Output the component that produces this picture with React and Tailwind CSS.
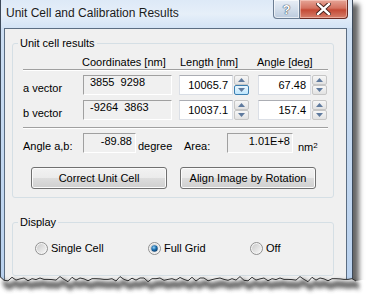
import React from "react";

// Unit Cell and Calibration Results dialog (Win7 look, torn bottom edge)

function SpinHalf({ up, hot }) {
  return (
    <div
      className={
        "flex-1 flex items-center justify-center rounded-[2px] border " +
        (hot
          ? "border-[#3c7fb1] bg-gradient-to-b from-[#eaf6fd] to-[#bee6fd]"
          : "border-[#c6c6c6] bg-gradient-to-b from-[#f7f7f7] to-[#e2e2e2]")
      }
    >
      <svg width="7" height="4" viewBox="0 0 7 4">
        {up ? (
          <path d="M0 4 L3.5 0 L7 4 Z" fill="#5f7a9e" />
        ) : (
          <path d="M0 0 L3.5 4 L7 0 Z" fill="#5f7a9e" />
        )}
      </svg>
    </div>
  );
}

function SpinEdit({ value, width, hot }) {
  return (
    <div className="flex h-[20px] gap-[1px]">
      <div
        className={`${width} h-full flex items-center justify-end pr-[4px] bg-white border border-[#dbdfe6] border-t-[#abadb3] text-[11px] leading-[13px]`}
      >
        {value}
      </div>
      <div className="w-[15px] h-full flex flex-col">
        <SpinHalf up />
        <SpinHalf hot={hot} />
      </div>
    </div>
  );
}

function Radio({ checked }) {
  return (
    <svg width="13" height="13" viewBox="0 0 13 13">
      <defs>
        <linearGradient id="rg" x1="0" y1="0" x2="1" y2="1">
          <stop offset="0" stopColor="#cbcbcb" />
          <stop offset="1" stopColor="#f6f6f6" />
        </linearGradient>
        <radialGradient id="rd" cx="0.4" cy="0.35" r="0.7">
          <stop offset="0" stopColor="#9fd4f5" />
          <stop offset="0.5" stopColor="#1a6fb0" />
          <stop offset="1" stopColor="#0c3a66" />
        </radialGradient>
      </defs>
      <circle cx="6.5" cy="6.5" r="6" fill="#f4f4f4" stroke="#8f8f8f" strokeWidth="1" />
      <circle cx="6.5" cy="6.5" r="4.5" fill="url(#rg)" />
      {checked && <circle cx="6.5" cy="6.5" r="3.2" fill="url(#rd)" />}
    </svg>
  );
}

function WinButton({ children }) {
  return (
    <button className="w-[136px] h-[22px] rounded-[3px] border border-[#707070] bg-[linear-gradient(#f2f2f2_0%,#ebebeb_50%,#dddddd_51%,#cfcfcf_100%)] shadow-[inset_0_0_0_1px_#fbfbfb] text-[11px] leading-[13px] text-black">
      {children}
    </button>
  );
}

const jag = [];
for (let x = 0, i = 0; x <= 356; x += 4, i++) {
  const y = 12 + ((i * 7) % 5) * 0.7 - (i % 3 === 0 ? 1.4 : 0) + (i % 4 === 1 ? 0.9 : 0);
  jag.push([x, y]);
}
const jagStr = jag.map((p) => p.join(",")).join(" ");
const whiteStr = jagStr + " 369,13 369,30 0,30";
const shadowTop = jag.map(([x, y]) => `${x + 3},${y + 2}`).join(" ");
const shadowBot = [...jag].reverse().map(([x, y]) => `${x + 3},${y + 9}`).join(" ");

export default function App() {
  return (
    <div className="relative w-[369px] h-[296px] bg-white overflow-hidden font-['Liberation_Sans',Arial,sans-serif] text-black">
      <div className="w-[353px] h-[286px] flex flex-col border-x border-[#3d4a5a] bg-gradient-to-b from-[#cfe0f3] to-[#b9d1ee] shadow-[6px_4px_5px_rgba(0,0,0,0.6)]">
        {/* title bar */}
        <div className="h-[28px] flex items-start bg-gradient-to-b from-[#dde9f7] via-[#e6eff9] to-[#d3e3f5]">
          <div className="flex-1 pl-[5px] pt-[6px] text-[12px] leading-[15px] text-[#1b1b1b]">
            Unit Cell and Calibration Results
          </div>
          <div className="flex mr-[4px]">
            <div className="w-[27px] h-[19px] flex items-center justify-center rounded-bl-[4px] border border-t-0 border-[#6b7d93] bg-gradient-to-b from-[#e8eef6] via-[#d3deeb] to-[#bccbde] shadow-[inset_0_0_0_1px_rgba(255,255,255,0.6)]">
              <span className="text-[13px] leading-[13px] font-bold text-white [text-shadow:0_0_1px_#1d2a3a,0_0_1px_#1d2a3a]">?</span>
            </div>
            <div className="w-[48px] h-[19px] flex items-center justify-center rounded-br-[4px] border border-t-0 border-l-0 border-[#6a2a22] bg-[linear-gradient(#e6a597_0%,#d47260_45%,#c44a35_55%,#d5806c_100%)] shadow-[inset_0_0_0_1px_rgba(255,220,210,0.5)]">
              <svg width="15" height="12" viewBox="0 0 15 12">
                <path d="M2 1 L13 11 M13 1 L2 11" stroke="#3a1a16" strokeWidth="4.2" strokeLinecap="square" />
                <path d="M2 1 L13 11 M13 1 L2 11" stroke="#ffffff" strokeWidth="2.4" strokeLinecap="square" />
              </svg>
            </div>
          </div>
        </div>

        {/* body frame */}
        <div className="flex-1 flex pl-[3px] pr-[5px]">
          <div className="flex-1 border border-[#5b6d82] bg-[#f0f0f0] pl-[7px] pt-[8px] text-[11px] leading-[13px]">
            <fieldset className="w-[322px] border border-[#d5dfe5] rounded-[3px] pb-[8px]">
              <legend className="ml-[5px] px-[2px]">Unit cell results</legend>

              <div className="flex mt-[6px] pl-[10px]">
                <div className="w-[59px]" />
                <div className="w-[97px]">Coordinates [nm]</div>
                <div className="w-[78px] pl-[1px]">Length [nm]</div>
                <div>Angle [deg]</div>
              </div>
              <div className="ml-[10px] mr-[5px] h-[2px] border-t border-b border-t-[#a0a0a0] border-b-white" />

              {[
                ["a vector", "3855  9298", "10065.7", "67.48", true],
                ["b vector", "-9264  3863", "10037.1", "157.4", false],
              ].map(([label, coords, len, ang, hot], i) => (
                <div key={label} className={"flex h-[20px] pl-[10px] " + (i === 0 ? "mt-[4px]" : "mt-[5px]")}>
                  <div className="w-[60px] pt-[7px]">{label}</div>
                  <div className="w-[89px] h-full border border-[#a0a0a0] border-r-white border-b-white pl-[6px] whitespace-pre">
                    {coords}
                  </div>
                  <div className="ml-[7px]">
                    <SpinEdit value={len} width="w-[54px]" hot={hot} />
                  </div>
                  <div className="ml-[9px]">
                    <SpinEdit value={ang} width="w-[53px]" />
                  </div>
                </div>
              ))}

              <div className="mt-[7px] ml-[10px] mr-[5px] h-[2px] border-t border-b border-t-[#a0a0a0] border-b-white" />

              <div className="flex h-[20px] mt-[4px] pl-[10px]">
                <div className="w-[60px] pt-[7px]">Angle a,b:</div>
                <div className="w-[53px] h-full border border-[#a0a0a0] border-r-white border-b-white pt-[1px] pr-[3px] text-right">
                  -89.88
                </div>
                <div className="w-[48px] pl-[2px] pt-[7px]">degree</div>
                <div className="w-[43px] pt-[7px]">Area:</div>
                <div className="w-[66px] h-full border border-[#a0a0a0] border-r-white border-b-white pt-[1px] pr-[2px] text-right">
                  1.01E+8
                </div>
                <div className="pl-[5px] pt-[8px]">
                  nm<span className="text-[8px] leading-[8px] align-[3px]">2</span>
                </div>
              </div>

              <div className="flex mt-[14px] pl-[18px] gap-[13px]">
                <WinButton>Correct Unit Cell</WinButton>
                <WinButton>Align Image by Rotation</WinButton>
              </div>
            </fieldset>

            <fieldset className="w-[322px] mt-[18px] border border-[#d5dfe5] rounded-[3px] pb-[20px]">
              <legend className="ml-[5px] px-[2px]">Display</legend>
              <div className="flex h-[13px] mt-[13px] pl-[22px]">
                <label className="w-[113px] flex items-center gap-[3px]">
                  <Radio />
                  <span>Single Cell</span>
                </label>
                <label className="w-[102px] flex items-center gap-[3px]">
                  <Radio checked />
                  <span>Full Grid</span>
                </label>
                <label className="flex items-center gap-[3px]">
                  <Radio />
                  <span>Off</span>
                </label>
              </div>
            </fieldset>
          </div>
        </div>
      </div>

      {/* torn bottom edge */}
      <svg className="absolute left-0 top-[266px]" width="369" height="30" viewBox="0 0 369 30">
        <defs>
          <filter id="blur" x="-10%" y="-100%" width="120%" height="300%">
            <feGaussianBlur stdDeviation="2" />
          </filter>
        </defs>
        <polygon points={whiteStr} fill="#ffffff" />
        <polygon points={shadowTop + " " + shadowBot} fill="#3a3a3a" opacity="0.75" filter="url(#blur)" />
        <polyline points={jagStr} fill="none" stroke="#2e2e2e" strokeWidth="1" />
      </svg>
    </div>
  );
}
